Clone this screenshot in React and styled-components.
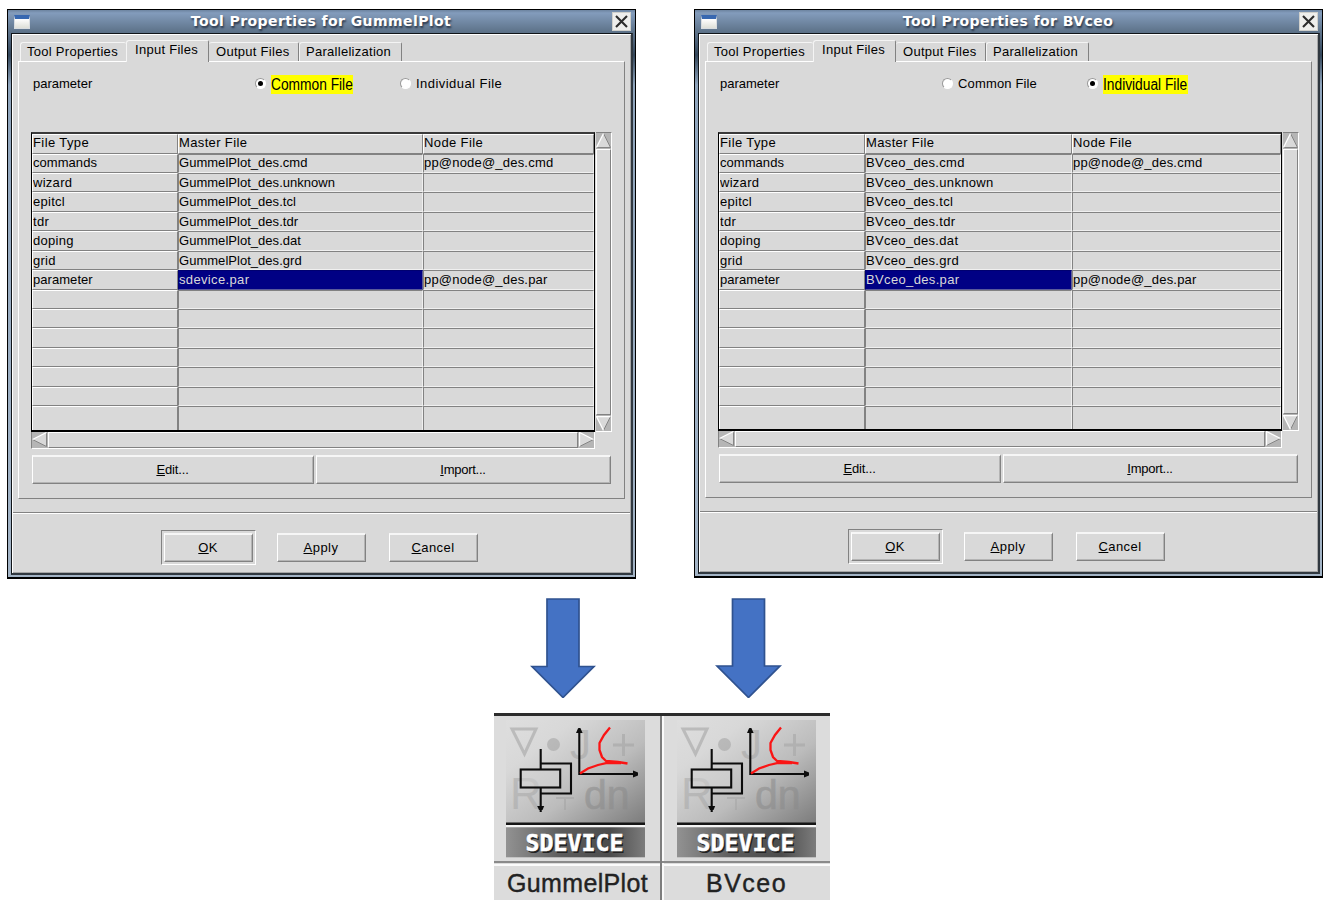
import React from "react";
import styled, { createGlobalStyle, css } from "styled-components";

const GlobalStyle = createGlobalStyle`
  * { box-sizing: border-box; }
  body { margin: 0; background: #fff; }
`;

const face = "#d9d9d9";
const shade = "#828282";

const raised = css`
  border-style: solid;
  border-width: 2px 1px 1px 1px;
  border-color: #f6f6f6 ${shade} ${shade} #fff;
  box-shadow: inset -1px -1px 0 #b4b4b4;
`;

const Page = styled.main`
  width: 1329px;
  height: 909px;
  overflow: hidden;
  padding: 9px 0 0 7px;
  background: #fff;
  font-family: "Liberation Sans", Arial, sans-serif;
  font-size: 13px;
  line-height: 16px;
  color: #000;
`;

const Dialogs = styled.div`
  display: flex;
  align-items: flex-start;
  gap: 58px;
  height: 570px;
`;

const Window = styled.section`
  display: flex;
  flex-direction: column;
  width: 629px;
  height: ${(p) => p.$height}px;
  border: 1px solid #000;
  border-bottom-width: 2px;
  background: linear-gradient(#7f99ba 0, #5b7088 24px, #33465a 45px, #8fa5bd 75px, #a3b4c6 100%);
`;

const TitleBar = styled.header`
  display: grid;
  grid-template-columns: 16px 1fr 19px;
  align-items: center;
  height: 23px;
  flex: none;
  padding: 0 4px 0 6px;
  background: linear-gradient(#6d84a0 0, #839cbc 3px, #5b7086 100%);
`;

const WindowIcon = styled.span`
  width: 16px;
  height: 14px;
  border: 1px solid #d8dce0;
  border-top: 4px solid #3868b0;
  background: linear-gradient(#fff, #dedfd8);
`;

const Title = styled.h1`
  margin: 0;
  position: relative;
  top: -1px;
  text-align: center;
  white-space: nowrap;
  font: bold 14px/20px "DejaVu Sans", sans-serif;
  letter-spacing: 0.42px;
  color: #fff;
  text-shadow: 1px 2px 2px rgba(20, 30, 45, 0.75);
`;

const Close = styled.button`
  display: flex;
  align-items: center;
  justify-content: center;
  width: 19px;
  height: 19px;
  padding: 0;
  border: 1px solid #d0d0cc;
  background: #eeeeec;
`;

const Body = styled.div`
  flex: 1;
  display: flex;
  flex-direction: column;
  margin: 0 2px 2px 3px;
  border: 1px solid #101418;
  border-right: 2px solid #303840;
  border-bottom: 2px solid #303840;
  background: ${face};
  box-shadow: inset 1px 1px 0 #fff, inset -1px -1px 0 #a6a6a6;
`;

const Notebook = styled.div`
  padding: 6px 6px 0 6px;
`;

const Tabs = styled.nav`
  display: flex;
  align-items: flex-end;
  height: 21px;
  padding-left: 2px;
`;

const Tab = styled.div`
  width: ${(p) => p.$width}px;
  height: ${(p) => (p.$active ? 22 : 19)}px;
  margin-bottom: ${(p) => (p.$active ? -1 : 0)}px;
  padding: 1px 0 0 ${(p) => (p.$active ? 8 : p.$plain ? 7 : 6)}px;
  border-top: 1px solid #f4f4f4;
  border-left: ${(p) => (p.$plain ? "0" : "1px solid #f4f4f4")};
  border-right: ${(p) => (p.$edge ? `1px solid ${shade}` : "0")};
  border-radius: 3px 2px 0 0;
  background: ${face};
  white-space: nowrap;
  letter-spacing: 0.28px;
`;

const Panel = styled.div`
  height: ${(p) => p.$height}px;
  padding: 0 0 0 12px;
  border: 1px solid #fff;
  border-right-color: ${shade};
  border-bottom-color: ${shade};
`;

const Options = styled.div`
  display: grid;
  grid-template-columns: 222px 16px 129px 16px 1fr;
  align-items: start;
  height: 70px;
  padding: 12px 0 0 2px;
  line-height: 19px;
`;

const Radio = styled.span`
  display: flex;
  align-items: center;
  justify-content: center;
  width: 11px;
  height: 11px;
  margin-top: 4px;
  border-radius: 50%;
  border: 1px solid;
  border-color: #999 #fff #fff #999;
  background: #fff;
  &::after {
    content: "";
    width: 5px;
    height: 5px;
    border-radius: 50%;
    background: ${(p) => (p.$on ? "#000" : "transparent")};
  }
`;

const OptionLabel = styled.span`
  white-space: nowrap;
  letter-spacing: ${(p) => p.$spacing || 0}px;
`;

const Highlight = styled.mark`
  display: block;
  width: ${(p) => p.$width}px;
  height: 19px;
  margin-top: 1px;
  background: #ff0;
  color: #000;
  font-size: 16px;
  line-height: 19px;
  white-space: nowrap;
`;

const Condensed = styled.span`
  display: inline-block;
  transform: scaleX(0.86);
  transform-origin: 0 50%;
`;

const GridArea = styled.div`
  display: grid;
  grid-template-columns: 564px 17px;
  grid-template-rows: ${(p) => p.$height}px 17px;
`;

const Table = styled.div`
  border: 1px solid #000;
  border-top: 2px solid #3a3a3a;
  border-bottom-width: 2px;
  overflow: hidden;
`;

const Row = styled.div`
  display: grid;
  grid-template-columns: ${(p) => p.$cols};
  height: ${(p) => p.$height}px;
`;

const Cell = styled.div`
  line-height: 17px;
  overflow: hidden;
  white-space: nowrap;
  letter-spacing: ${(p) => p.$spacing ?? 0.28}px;
  border: 1px solid;
  border-color: ${shade} #f0f0f0 #f0f0f0 ${shade};
  ${(p) => p.$first && css`line-height: 16px;`}
  ${(p) => p.$selected && css`
    background: #000084;
    border-color: #000070 #5a5a9a #5a5a9a #000070;
    color: #d9d9d9;
  `}
`;

const HeadCell = styled(Cell)`
  border-color: #fff ${shade} ${shade} #fff;
`;

const VBar = styled.div`
  display: flex;
  flex-direction: column;
  width: 16px;
  margin-left: 1px;
  background: #b5b5b5;
  border-top: 1px solid ${shade};
  border-right: 1px solid #fff;
  border-bottom: 1px solid #fff;
`;

const HBar = styled.div`
  display: flex;
  height: 17px;
  background: #b5b5b5;
  border-left: 1px solid ${shade};
  border-right: 1px solid #fff;
  border-bottom: 1px solid #fff;
`;

const Thumb = styled.div`
  flex: 1;
  background: ${face};
  border: 1px solid #fff;
  border-right: 1px solid ${shade};
  border-bottom: 1px solid ${shade};
  margin: ${(p) => (p.$vertical ? "1px 0" : "0 1px")};
`;

const WideButtons = styled.div`
  display: grid;
  grid-template-columns: 282px 295px;
  gap: 2px;
  padding: 6px 0 0 1px;
`;

const Button = styled.button`
  ${raised}
  height: 29px;
  padding: 0 1px 1px 0;
  background: ${face};
  color: #000;
  font: inherit;
  letter-spacing: ${(p) => p.$spacing}px;
`;

const Footer = styled.footer`
  display: flex;
  align-items: center;
  gap: 23px;
  flex: 1;
  margin: 13px 1px 1px;
  padding: 9px 0 0 148px;
  border-top: 1px solid ${shade};
  box-shadow: inset 0 1px 0 #fff;
  ${Button} {
    width: 89px;
    padding: 1px 1px 0 0;
  }
`;

const DefaultRing = styled.div`
  display: flex;
  align-items: center;
  justify-content: center;
  width: 95px;
  height: 35px;
  margin-right: -2px;
  border: 1px solid;
  border-color: ${shade} #fff #fff ${shade};
`;

const Arrows = styled.div`
  display: flex;
  gap: 119px;
  height: 134px;
  padding: 18px 0 0 523px;
`;

const ToolStrip = styled.div`
  display: grid;
  grid-template-columns: 168px 1fr;
  width: 336px;
  height: 187px;
  margin-left: 487px;
  border-top: 3px solid #2c2c2c;
  background: #dcdcdc;
`;

const Tool = styled.div`
  display: flex;
  flex-direction: column;
  border-right: ${(p) => (p.$divider ? "2px solid #7d7d7d" : "0")};
  box-shadow: ${(p) => (p.$divider ? "2px 0 0 #fafafa" : "none")};
`;

const IconSlot = styled.div`
  height: 147px;
  padding: 4px 0 0 ${(p) => (p.$offset ? 15 : 12)}px;
  border-bottom: 2px solid #8a8a8a;
`;

const ToolName = styled.div`
  flex: 1;
  margin-top: 1px;
  padding-left: ${(p) => p.$left}px;
  border-top: 2px solid #fafafa;
  font-size: 25px;
  line-height: 34px;
  letter-spacing: ${(p) => p.$spacing}px;
  color: #222;
  -webkit-text-stroke: 0.4px #222;
  white-space: nowrap;
`;

const Stepper = ({ dir }) => {
  const shapes = {
    up: ["M7.5 0.5L14.5 14.5H0.5Z", "M0.5 14.5L7.5 0.5", "M7.5 0.5L14.5 14.5H0.5"],
    down: ["M0.5 0.5H14.5L7.5 14.5Z", "M7.5 14.5L0.5 0.5H14.5", "M14.5 0.5L7.5 14.5"],
    left: ["M14.5 0.5V14.5L0.5 7.5Z", "M0.5 7.5L14.5 0.5", "M14.5 0.5V14.5L0.5 7.5"],
    right: ["M0.5 0.5L14.5 7.5L0.5 14.5Z", "M0.5 14.5V0.5L14.5 7.5", "M14.5 7.5L0.5 14.5"],
  }[dir];
  return (
    <svg width="15" height="15" viewBox="0 0 15 15" display="block">
      <path d={shapes[0]} fill={face} />
      <path d={shapes[2]} fill="none" stroke="#858585" />
      <path d={shapes[1]} fill="none" stroke="#fff" strokeWidth="1.3" />
    </svg>
  );
};

const Arrow = ({ width, head }) => {
  const mid = width / 2;
  const half = 16;
  return (
    <svg width={width} height="101" viewBox={`0 0 ${width} 101`}>
      <path
        d={`M${mid - half} 2H${mid + half}V${head}H${width - 2}L${mid} 100.500L2 ${head}H${mid - half}Z`}
        fill="#4472c4"
        stroke="#2f528f"
        strokeWidth="1.7"
      />
    </svg>
  );
};

const DeviceIcon = ({ id }) => (
  <svg width="139" height="138" viewBox="0 0 139 138" display="block">
    <defs>
      <linearGradient id={`${id}-sky`} x1="0" y1="0" x2="1" y2="1">
        <stop offset="0" stopColor="#dedede" />
        <stop offset="0.25" stopColor="#d8d8d8" />
        <stop offset="0.6" stopColor="#bcbcbc" />
        <stop offset="1" stopColor="#7c7c7c" />
      </linearGradient>
      <linearGradient id={`${id}-bar`}>
        <stop offset="0" stopColor="#929292" />
        <stop offset="0.4" stopColor="#5c5c5c" />
        <stop offset="0.75" stopColor="#4c4c4c" />
        <stop offset="1" stopColor="#7c7c7c" />
      </linearGradient>
    </defs>
    <rect width="139" height="103" fill={`url(#${id}-sky)`} />
    <g fill="none" stroke="#a6a6a6" strokeWidth="3" opacity="0.6">
      <path d="M6 9H30L18.500 34Z" />
      <path d="M107 25H128M117.500 14V36" />
      <path d="M50 78H68M59 78V90" strokeWidth="2" />
      <circle cx="47.500" cy="24.500" r="6.500" fill="#a6a6a6" stroke="none" />
    </g>
    <g fontFamily="Liberation Sans" opacity="0.55">
      <text x="64" y="39" fontSize="42" fill="#a4a4a4">J</text>
      <text x="4" y="89" fontSize="44" fill="#a8a8a8">R</text>
      <text x="78" y="89" fontSize="41" fill="#8a8a8a" stroke="#8a8a8a" strokeWidth="0.6">dn</text>
    </g>
    <g fill="none" stroke="#0c0c0c" strokeWidth="2.100">
      <path d="M34.700 43.500H65V73.500H34.700" />
      <rect x="14.700" y="49.500" width="39.500" height="18" fill="#d4d4d4" fillOpacity="0.5" />
      <path d="M34.700 29V49.500M34.700 67.500V92M73.300 8V54H132" />
    </g>
    <g fill="#0c0c0c">
      <path d="M31.200 86H38.200L36.500 90H33Z" />
      <path d="M70 13L72 8.500H74.600L76.600 13Z" />
      <path d="M127 50.500L132 52.500V55.500L127 57.500Z" />
    </g>
    <g fill="none" stroke="#fa1414" strokeWidth="2.300">
      <path d="M104 7.500L98 15L93.500 23L93.500 30L96 37L100 41L112 42L121.500 43.500" />
      <path d="M74 53.500L82 48.500L92 45L101 43H115" />
    </g>
    <rect y="102.500" width="139" height="2.500" fill="#151515" />
    <rect y="105" width="139" height="2.300" fill="#f4f4f4" />
    <rect y="107.300" width="139" height="30" fill={`url(#${id}-bar)`} />
    <g fontFamily="DejaVu Sans Mono" fontWeight="bold" fontSize="23">
      <text x="21" y="132.500" textLength="98" lengthAdjust="spacingAndGlyphs" fill="#222">SDEVICE</text>
      <text x="19.500" y="131" textLength="98" lengthAdjust="spacingAndGlyphs" fill="#fff" stroke="#fff" strokeWidth="0.5">SDEVICE</text>
    </g>
  </svg>
);

const FileDialog = ({ tool, height, cols, areaHeight, panelHeight, common, files, spacing }) => (
  <Window $height={height}>
    <TitleBar>
      <WindowIcon />
      <Title>Tool Properties for {tool}</Title>
      <Close>
        <svg width="13" height="13" viewBox="0 0 13 13">
          <path d="M1 1L12 12M12 1L1 12" stroke="#2c2c2c" strokeWidth="2.100" />
        </svg>
      </Close>
    </TitleBar>
    <Body>
      <Notebook>
        <Tabs>
          <Tab $width={106}>Tool Properties</Tab>
          <Tab $width={83} $active $edge>Input Files</Tab>
          <Tab $width={90} $edge $plain>Output Files</Tab>
          <Tab $width={103} $edge>Parallelization</Tab>
        </Tabs>
        <Panel $height={panelHeight}>
          <Options>
            <OptionLabel>parameter</OptionLabel>
            <Radio $on={common} />
            {common
              ? <Highlight $width={82}><Condensed>Common File</Condensed></Highlight>
              : <OptionLabel $spacing={0.15}>Common File</OptionLabel>}
            <Radio $on={!common} />
            {common
              ? <OptionLabel $spacing={0.45}>Individual File</OptionLabel>
              : <Highlight $width={85}><Condensed>Individual File</Condensed></Highlight>}
          </Options>
          <GridArea $height={areaHeight}>
            <Table>
              <Row $cols={cols} $height={19.5}>
                <HeadCell $first $spacing={0.4}>File Type</HeadCell>
                <HeadCell $first $spacing={0.36}>Master File</HeadCell>
                <HeadCell $first $spacing={0.38}>Node File</HeadCell>
              </Row>
              {files.map(([type, master, node], i) => (
                <Row key={i} $cols={cols} $height={i === 13 ? 25 : 19.45}>
                  <HeadCell $first={i === 0} $spacing={type.length > 7 ? 0.05 : 0.28}>{type}</HeadCell>
                  <Cell
                    $first={i === 0}
                    $selected={type === "parameter"}
                    $spacing={type === "parameter" ? 0.35 : spacing}
                  >
                    {master}
                  </Cell>
                  <Cell $first={i === 0} $spacing={0.2}>{node}</Cell>
                </Row>
              ))}
            </Table>
            <VBar><Stepper dir="up" /><Thumb $vertical /><Stepper dir="down" /></VBar>
            <HBar><Stepper dir="left" /><Thumb /><Stepper dir="right" /></HBar>
          </GridArea>
          <WideButtons>
            <Button $spacing={-0.15}><u>E</u>dit...</Button>
            <Button $spacing={-0.25}><u>I</u>mport...</Button>
          </WideButtons>
        </Panel>
      </Notebook>
      <Footer>
        <DefaultRing><Button $spacing={0.3}><u>O</u>K</Button></DefaultRing>
        <Button $spacing={0.5}><u>A</u>pply</Button>
        <Button $spacing={0.4}><u>C</u>ancel</Button>
      </Footer>
    </Body>
  </Window>
);

const fileRows = (tool, parameterFile) => [
  ["commands", `${tool}_des.cmd`, "pp@node@_des.cmd"],
  ["wizard", `${tool}_des.unknown`, ""],
  ["epitcl", `${tool}_des.tcl`, ""],
  ["tdr", `${tool}_des.tdr`, ""],
  ["doping", `${tool}_des.dat`, ""],
  ["grid", `${tool}_des.grd`, ""],
  ["parameter", parameterFile, "pp@node@_des.par"],
  ...Array.from({ length: 7 }, () => ["", "", ""]),
];

export default function App() {
  return (
    <Page>
      <GlobalStyle />
      <Dialogs>
        <FileDialog
          tool="GummelPlot"
          height={570}
          cols="146px 245px 1fr"
          areaHeight={300}
          panelHeight={438}
          common
          files={fileRows("GummelPlot", "sdevice.par")}
          spacing={0.03}
        />
        <FileDialog
          tool="BVceo"
          height={569}
          cols="146px 207px 1fr"
          areaHeight={299}
          panelHeight={437}
          common={false}
          files={fileRows("BVceo", "BVceo_des.par")}
          spacing={0.32}
        />
      </Dialogs>
      <Arrows>
        <Arrow width={66} head={69.5} />
        <Arrow width={67} head={69} />
      </Arrows>
      <ToolStrip>
        <Tool $divider>
          <IconSlot><DeviceIcon id="gummel" /></IconSlot>
          <ToolName $left={13} $spacing={0.35}>GummelPlot</ToolName>
        </Tool>
        <Tool>
          <IconSlot $offset><DeviceIcon id="bvceo" /></IconSlot>
          <ToolName $left={44} $spacing={1.5}>BVceo</ToolName>
        </Tool>
      </ToolStrip>
    </Page>
  );
}
